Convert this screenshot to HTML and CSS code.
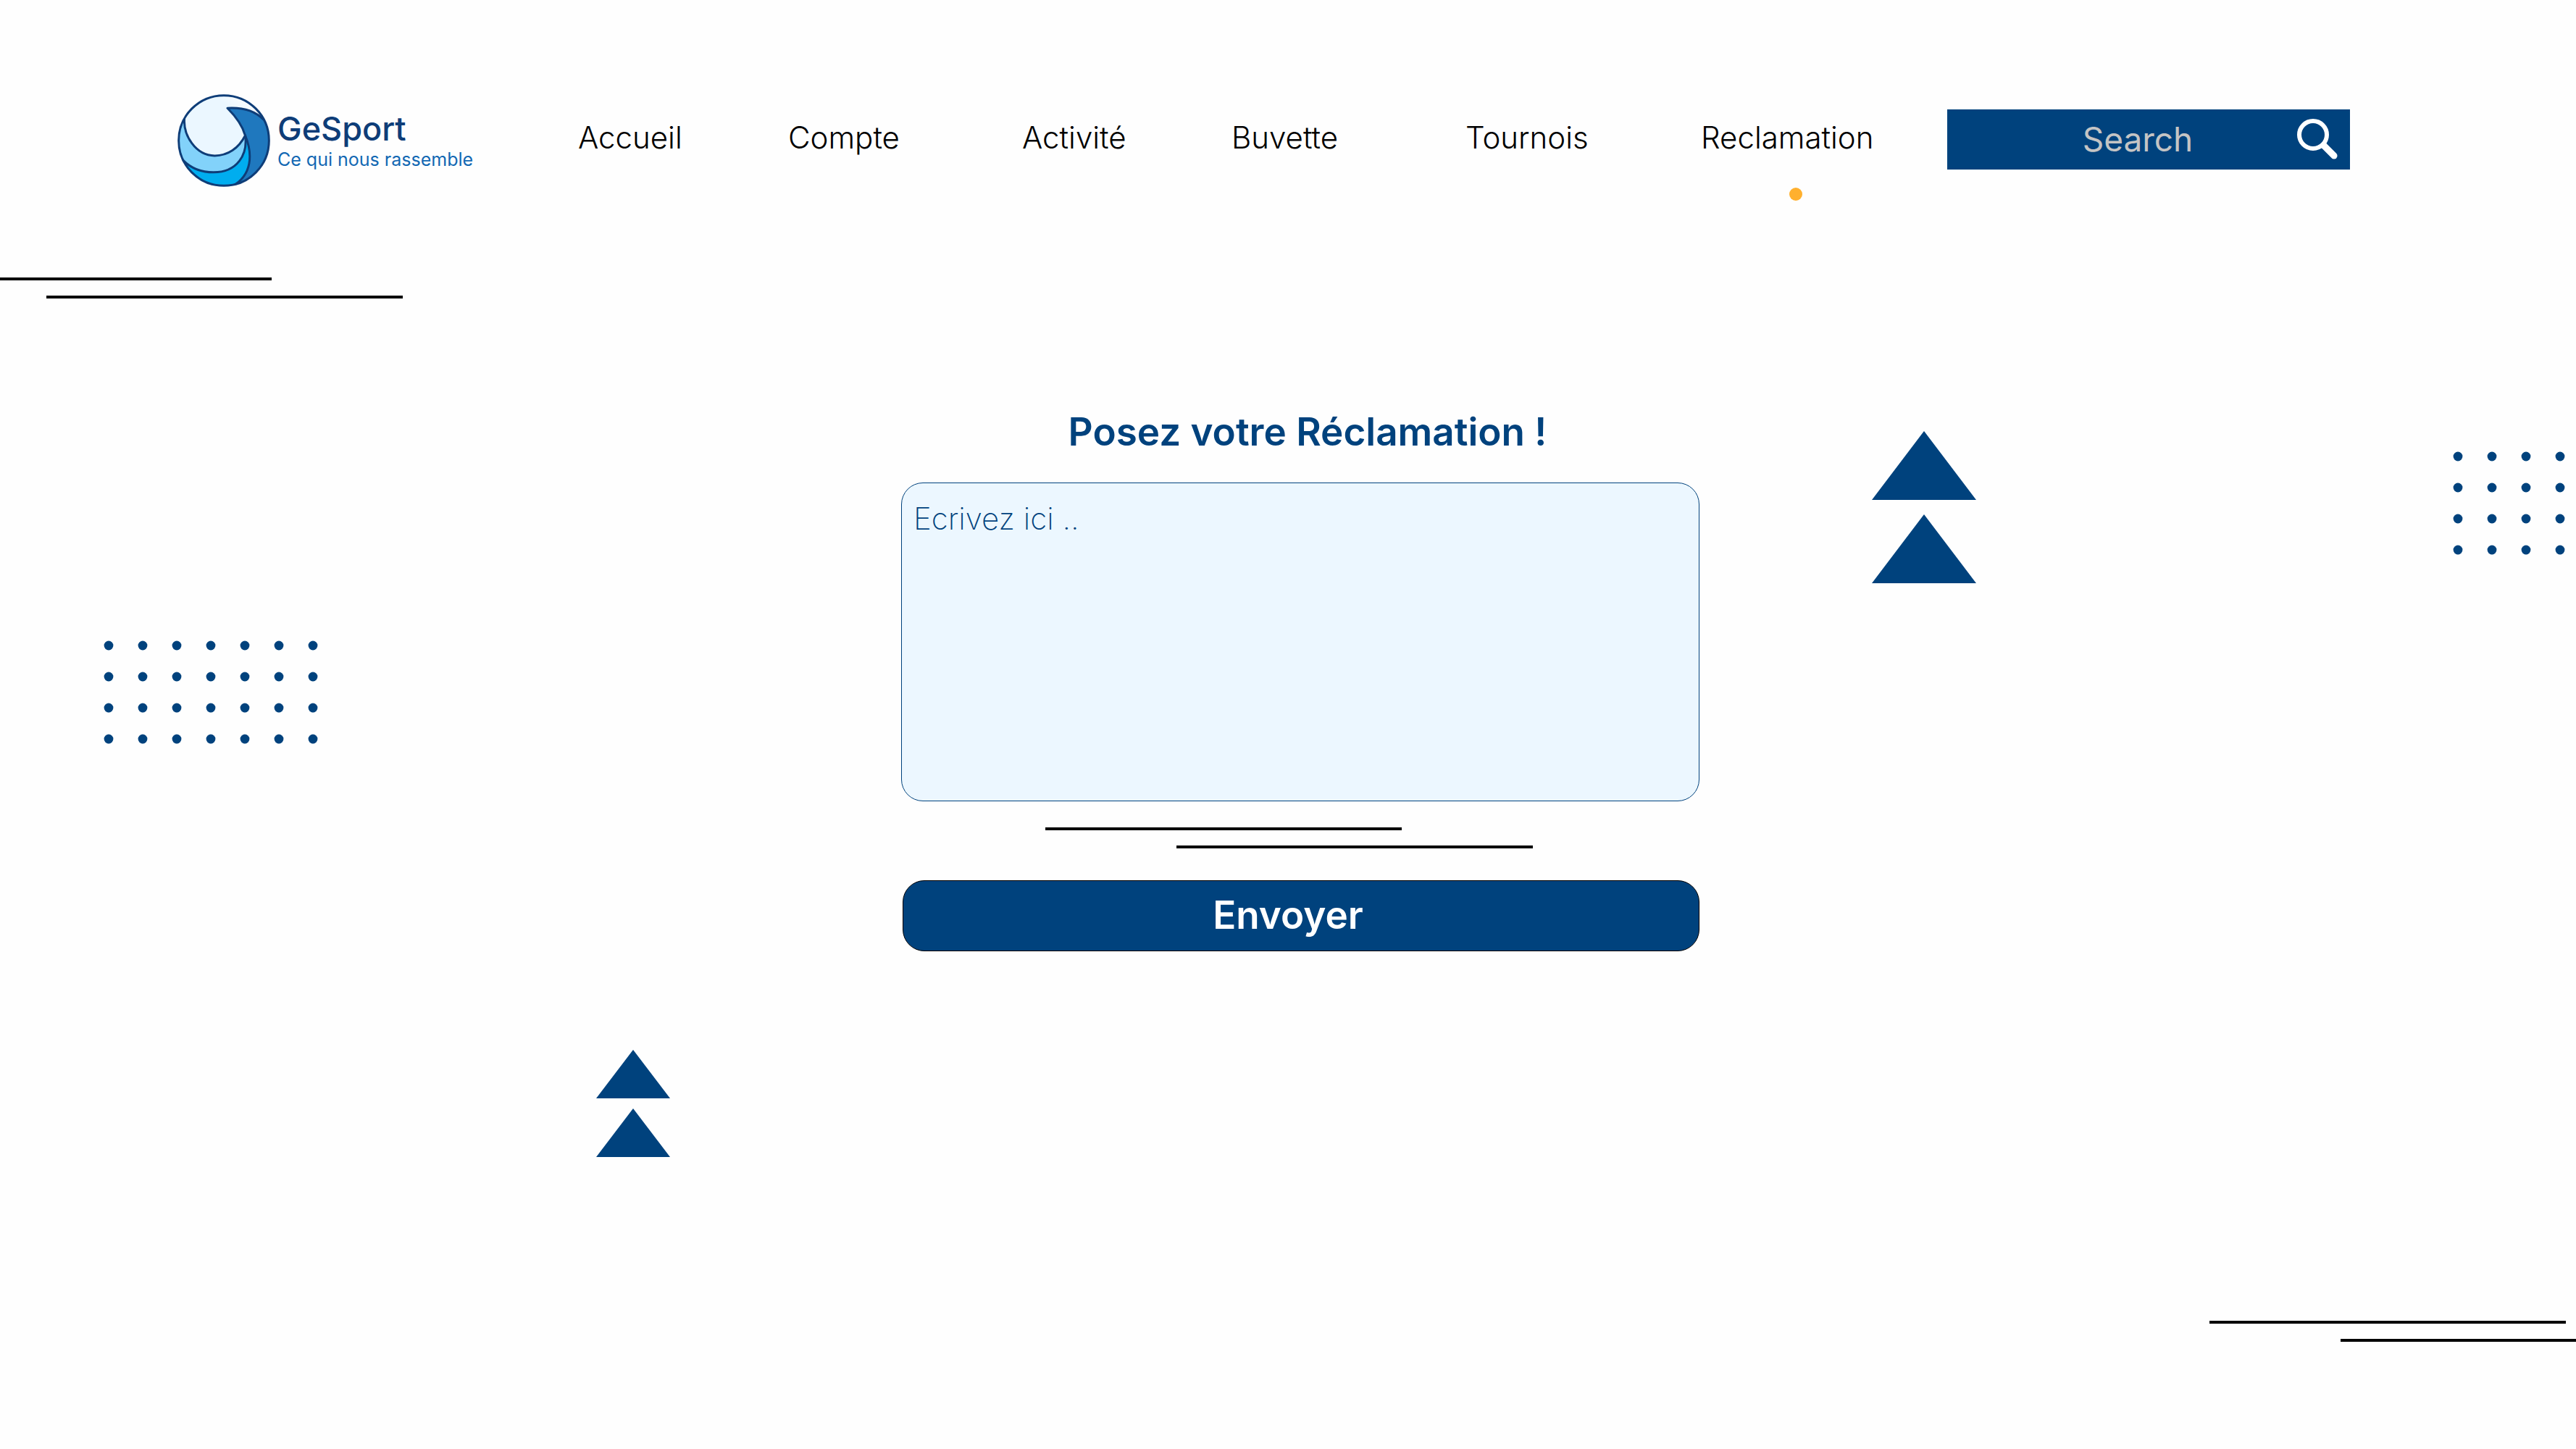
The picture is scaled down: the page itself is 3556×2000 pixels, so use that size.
FILE: index.html
```html
<!DOCTYPE html>
<html lang="fr">
<head>
<meta charset="utf-8">
<meta name="viewport" content="width=device-width, initial-scale=1">
<title>GeSport – Réclamation</title>
<link rel="stylesheet" href="styles.css">
</head>
<body>
<header class="header">
  <a class="brand" href="#">
    <svg class="brand-mark" viewBox="75 60 386 386" aria-hidden="true">
      <defs>
        <clipPath id="ball"><circle cx="268" cy="253" r="189"/></clipPath>
        <linearGradient id="shine" x1="0" y1="1" x2="1" y2="0"><stop offset="0.65" stop-color="#ebf7ff"/><stop offset="0.85" stop-color="#fff"/></linearGradient>
      </defs>
      <g clip-path="url(#ball)" stroke="#0e3d78" stroke-width="9" stroke-linejoin="round">
        <circle cx="268" cy="253" r="189" fill="#1f78be" stroke="none"/>
        <path d="M60 310 L357 232 C385 300 395 400 290 450 L60 460Z" fill="#00adef"/>
        <path d="M60 150 L357 232 C368 310 325 385 225 385 C165 385 120 365 84 318 L60 318Z" fill="#82d2fa"/>
        <path d="M283 118 C335 115 390 122 432 165 L470 165 L470 40 L60 40 L60 150 L104 160 C98 230 150 316 230 316 C285 316 330 285 357 232 C345 190 315 150 283 118Z" fill="url(#shine)"/>
      </g>
      <circle cx="268" cy="253" r="188" fill="none" stroke="#0e3d78" stroke-width="9"/>
    </svg>
    <span class="brand-text">
      <span class="brand-name">GeSport</span>
      <span class="brand-tagline">Ce qui nous rassemble</span>
    </span>
  </a>
  <nav class="nav">
    <a class="nav-link" href="#">Accueil</a>
    <a class="nav-link" href="#">Compte</a>
    <a class="nav-link" href="#">Activité</a>
    <a class="nav-link" href="#">Buvette</a>
    <a class="nav-link" href="#">Tournois</a>
    <a class="nav-link is-active" href="#" aria-current="page">Reclamation</a>
  </nav>
  <form class="search" role="search">
    <input class="search-input" type="search" placeholder="Search" aria-label="Search">
    <button class="search-button" type="submit" aria-label="Search">
      <svg class="search-icon" viewBox="0 0 56 56" aria-hidden="true"><circle cx="22" cy="22" r="19" fill="none" stroke="#fff" stroke-width="6"/><path d="M37 37L51 51" stroke="#fff" stroke-width="9" stroke-linecap="round"/></svg>
    </button>
  </form>
</header>

<main class="main">
  <form class="claim">
    <label class="claim-title" for="claim-text">Posez votre Réclamation !</label>
    <textarea class="claim-text" id="claim-text" placeholder="Ecrivez ici .."></textarea>
    <div class="claim-rule" aria-hidden="true"><span class="line"></span><span class="line line-shifted"></span></div>
    <button class="claim-send" type="submit">Envoyer</button>
  </form>
</main>

<div class="decor" aria-hidden="true">
  <div class="rule rule-top"><span class="line"></span><span class="line line-shifted"></span></div>
  <div class="rule rule-bottom"><span class="line"></span><span class="line line-shifted"></span></div>
  <svg class="dots dots-left"><defs><pattern id="dot" width="47" height="43" patternUnits="userSpaceOnUse"><circle cx="7" cy="7" r="6.4" fill="#00427d"/></pattern></defs><rect width="100%" height="100%" fill="url(#dot)"/></svg>
  <svg class="dots dots-right"><rect width="100%" height="100%" fill="url(#dot)"/></svg>
  <svg class="arrows arrows-large" viewBox="0 0 144 210"><path d="M72 0L144 95H0ZM72 115L144 210H0Z"/></svg>
  <svg class="arrows arrows-small" viewBox="0 0 102 148"><path d="M51 0L102 67H0ZM51 81L102 148H0Z"/></svg>
</div>
</body>
</html>
```
FILE: styles.css
```css
:root {
  --navy: #00427d;
  --pale: #ecf7ff;
  --page: #fefefe;
}

* {
  box-sizing: border-box;
}

body {
  position: relative;
  min-height: 100vh;
  margin: 0;
  overflow-x: hidden;
  background: var(--page);
  color: #000;
  font-family: Inter, "Liberation Sans", sans-serif;
}

a {
  color: inherit;
  text-decoration: none;
}

/* Header */
.header {
  display: flex;
  align-items: center;
  padding: 130px 312px 0 245px;
}

.brand {
  display: flex;
  flex: 0 0 553px;
  align-items: center;
  gap: 10px;
}

.brand-mark {
  width: 128px;
  height: 128px;
}

.brand-text {
  display: flex;
  flex-direction: column;
  padding-top: 4px;
}

.brand-name {
  color: #0e3d78;
  font-size: 45px;
  font-weight: 500;
  line-height: 48px;
}

.brand-tagline {
  color: #1268b3;
  font-size: 25px;
  line-height: 36px;
}

.nav {
  display: grid;
  flex: 1;
  grid-template-columns: 290fr 323fr 289fr 323fr 325fr 340fr;
  padding-bottom: 8px;
}

.nav-link {
  position: relative;
  justify-self: start;
  font-size: 42px;
  font-weight: 300;
  line-height: 48px;
}

.nav-link.is-active::after {
  position: absolute;
  top: 93px;
  left: 122px;
  width: 18px;
  height: 18px;
  border-radius: 50%;
  background: #ffb02e;
  content: "";
}

.search {
  display: flex;
  flex: 0 0 556px;
  align-items: center;
  min-width: 0;
  height: 83px;
  margin-bottom: 4px;
  padding-right: 17px;
  background: var(--navy);
}

.search-input {
  flex: 1;
  width: 0;
  min-width: 0;
  height: 100%;
  padding: 0 0 0 68px;
  border: 0;
  background: none;
  color: #fff;
  font: 400 46px Inter, "Liberation Sans", sans-serif;
  text-align: center;
  appearance: none;
}

.search-input::placeholder {
  color: #c4c4c4;
  opacity: 1;
}

.search-button {
  display: flex;
  padding: 0;
  border: 0;
  background: none;
}

.search-icon {
  width: 56px;
  height: 56px;
}

/* Claim form */
.main {
  padding: 306px 0 0 34px;
}

.claim {
  display: flex;
  flex-direction: column;
  width: 100%;
  max-width: 1102px;
  margin: 0 auto;
}

.claim-title {
  margin-bottom: 38px;
  padding-left: 20px;
  color: var(--navy);
  font-size: 53px;
  font-weight: 600;
  line-height: 64px;
  text-align: center;
}

.claim-text {
  height: 440px;
  padding: 24px 16px;
  border: 1px solid var(--navy);
  border-radius: 30px;
  background: var(--pale);
  color: var(--navy);
  font: 200 42px/50px Inter, "Liberation Sans", sans-serif;
  resize: none;
}

.claim-text::placeholder {
  color: var(--navy);
  opacity: 1;
}

.claim-rule {
  margin: 36px 0 44px 199px;
}

.claim-send {
  height: 98px;
  margin-left: 2px;
  padding: 0 36px 2px 0;
  border: 1px solid #000;
  border-radius: 30px;
  background: var(--navy);
  color: #fff;
  font: 600 53px Inter, "Liberation Sans", sans-serif;
}

/* Ornaments */
.line {
  display: block;
  width: 492px;
  height: 4px;
  background: #000;
}

.line-shifted {
  margin: 21px 0 0 181px;
}

.decor {
  position: absolute;
  inset: 0;
  overflow: hidden;
  pointer-events: none;
}

.rule,
.dots,
.arrows {
  position: absolute;
}

.rule-top {
  top: 383px;
  left: -117px;
}

.rule-bottom {
  right: -167px;
  bottom: 148px;
}

.dots-left {
  top: 884px;
  left: 143px;
  width: 296px;
  height: 143px;
}

.dots-right {
  top: 623px;
  right: 8px;
  width: 162px;
  height: 143px;
}

.arrows {
  fill: var(--navy);
}

.arrows-large {
  top: 595px;
  right: 828px;
  width: 144px;
  height: 210px;
}

.arrows-small {
  top: 1449px;
  left: 823px;
  width: 102px;
  height: 148px;
}
```
